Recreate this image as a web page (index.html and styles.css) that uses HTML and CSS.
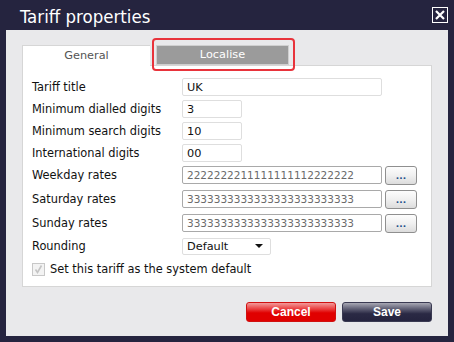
FILE: index.html
```html
<!DOCTYPE html>
<html lang="en">
<head>
  <meta charset="UTF-8">
  <title>Tariff properties</title>
  <link rel="stylesheet" href="styles.css">
</head>
<body>
  <div class="window">
    <div class="titlebar">
      <span class="title">Tariff properties</span>
      <span class="close">
        <svg width="16" height="16" viewBox="0 0 16 16">
          <rect x="0.5" y="0.5" width="15" height="15" fill="none" stroke="#fff" stroke-width="1"/>
          <path d="M4 4 L12 12 M12 4 L4 12" stroke="#fff" stroke-width="2.2"/>
        </svg>
      </span>
    </div>

    <div class="content">
      <div class="tabs">
        <div class="tab tab-active">General</div>
        <div class="tab tab-off">Localise</div>
        <div class="highlight"></div>
      </div>

      <div class="panel">
        <div class="row">
          <label>Tariff title</label>
          <input class="field wide" type="text" value="UK">
        </div>
        <div class="row">
          <label>Minimum dialled digits</label>
          <input class="field short" type="text" value="3">
        </div>
        <div class="row">
          <label>Minimum search digits</label>
          <input class="field short" type="text" value="10">
        </div>
        <div class="row">
          <label>International digits</label>
          <input class="field short" type="text" value="00">
        </div>
        <div class="row row-btn first-rate">
          <label>Weekday rates</label>
          <input class="field wide rate" type="text" value="2222222211111111112222222">
          <button class="dots">...</button>
        </div>
        <div class="row row-btn">
          <label>Saturday rates</label>
          <input class="field wide rate" type="text" value="3333333333333333333333333">
          <button class="dots">...</button>
        </div>
        <div class="row row-btn">
          <label>Sunday rates</label>
          <input class="field wide rate" type="text" value="3333333333333333333333333">
          <button class="dots">...</button>
        </div>
        <div class="row">
          <label>Rounding</label>
          <div class="select">Default<span class="arrow"></span></div>
        </div>
        <div class="check-row">
          <span class="checkbox">
            <svg width="11" height="11" viewBox="0 0 11 11">
              <path d="M2.5 5.5 L4.5 8.5 L8.5 1.5" fill="none" stroke="#c4c4c4" stroke-width="1.6"/>
            </svg>
          </span>
          <span>Set this tariff as the system default</span>
        </div>
      </div>

      <div class="footer">
        <button class="btn cancel">Cancel</button>
        <button class="btn save">Save</button>
      </div>
    </div>
  </div>
</body>
</html>
```

FILE: styles.css
```css
body {
  margin: 0;
  background-color: #25243f;
  font-family: "DejaVu Sans", Verdana, sans-serif;
  font-size: 11px;
  color: #111;
}

.window {
  width: 454px;
  height: 342px;
}

.titlebar {
  height: 30px;
  display: flex;
  align-items: center;
  justify-content: space-between;
  padding: 0 6px 0 20px;
  box-sizing: border-box;
}

.title {
  font-family: "DejaVu Sans Condensed", "DejaVu Sans", sans-serif;
  font-size: 18.5px;
  color: #fff;
  margin-top: 2px;
}

.close {
  display: flex;
  margin-top: -1px;
}

.content {
  margin: 0 6px;
  height: 306px;
  background-color: #e9e9eb;
  padding: 15px 16px 0 16px;
  box-sizing: border-box;
}

.tabs {
  display: flex;
  gap: 6px;
  height: 20px;
  position: relative;
}

.tab {
  box-sizing: border-box;
  text-align: center;
  line-height: 19px;
  font-size: 11.3px;
}

.tab-active {
  width: 128px;
  height: 21px;
  background-color: #fff;
  border-left: 1px solid #d6d6d6;
  border-top: 1px solid #d6d6d6;
  color: #555;
  position: relative;
  z-index: 1;
}

.tab-off {
  width: 133px;
  height: 20px;
  background-color: #9b9b9b;
  border: 1px solid #cfcfcf;
  color: #fff;
  line-height: 18px;
}

.highlight {
  position: absolute;
  left: 130px;
  top: -7px;
  width: 143px;
  height: 33px;
  border: 2px solid #e8333b;
  border-radius: 4px;
  box-sizing: border-box;
  z-index: 2;
}

.panel {
  height: 222px;
  background-color: #fff;
  border: 1px solid #d6d6d6;
  box-sizing: border-box;
  padding: 12px 0 0 9px;
  display: flex;
  flex-direction: column;
  gap: 4px;
}

.row {
  display: flex;
  align-items: center;
  height: 18px;
}

.row-btn {
  height: 20px;
}

.first-rate {
  margin-top: -1px;
}

.row label {
  width: 150px;
  flex-shrink: 0;
  font-size: 11.4px;
}

.field {
  box-sizing: border-box;
  height: 18px;
  border: 1px solid #dedede;
  border-radius: 2px;
  padding: 0 4px;
  font-family: "DejaVu Sans", Verdana, sans-serif;
  font-size: 11.3px;
  color: #111;
  background: #fff;
  outline: none;
}

.wide {
  width: 200px;
}

.short {
  width: 60px;
}

.rate {
  border-color: #a9a9a9;
  color: #6a6a6a;
  font-size: 10.5px;
}

.dots {
  margin-left: 3px;
  width: 32px;
  height: 19px;
  border: 1px solid #8f8f8f;
  border-radius: 3px;
  background: linear-gradient(#fdfdfd, #f0f0f0 50%, #dcdcdc);
  color: #1d4f8a;
  font-weight: bold;
  font-size: 9px;
  line-height: 18px;
  padding: 0;
  font-family: "DejaVu Sans", sans-serif;
}

.select {
  width: 89px;
  height: 17px;
  box-sizing: border-box;
  border: 1px solid #dedede;
  border-radius: 2px;
  padding: 0 4px;
  display: flex;
  align-items: center;
  justify-content: space-between;
  font-size: 11.3px;
}

.arrow {
  width: 0;
  height: 0;
  border-left: 4px solid transparent;
  border-right: 4px solid transparent;
  border-top: 4px solid #111;
  margin-right: 3px;
}

.check-row {
  display: flex;
  align-items: center;
  gap: 5px;
  margin-top: 3px;
  font-size: 11.4px;
}

.checkbox {
  width: 13px;
  height: 13px;
  box-sizing: border-box;
  border: 1px solid #c8c8c8;
  background: #f3f3f3;
  display: flex;
  align-items: center;
  justify-content: center;
}

.footer {
  display: flex;
  justify-content: flex-end;
  gap: 6px;
  margin-top: 15px;
}

.btn {
  width: 90px;
  height: 20px;
  border-radius: 3px;
  font-family: "Liberation Sans", Arial, sans-serif;
  font-weight: bold;
  font-size: 12px;
  color: #fff;
  padding: 0;
}

.cancel {
  border: 1px solid #d01010;
  background: linear-gradient(#f29a9a, #ea3a3a 35%, #e00000 55%, #e00000);
}

.save {
  border: 1px solid #3a3a52;
  background: linear-gradient(#a8a8b4, #5a5a70 35%, #2a2944 60%, #25243f);
}
```
